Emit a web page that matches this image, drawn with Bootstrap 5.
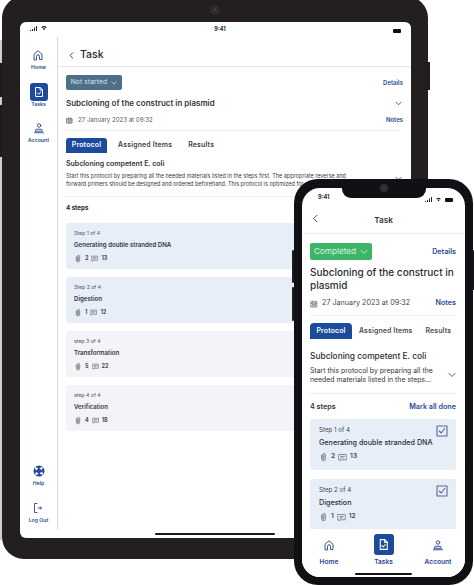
<!DOCTYPE html>
<html lang="en">
<head>
    <meta charset="UTF-8">
    <meta name="viewport" content="width=device-width, initial-scale=1.0">
    <title>Task</title>
    <link rel="stylesheet" href="https://cdn.jsdelivr.net/npm/bootstrap@5.3.0/dist/css/bootstrap.min.css">
    <style>
        html, body { margin: 0; height: 100%; background: #fff; overflow: hidden; }
        body { font-family: Inter, "Liberation Sans", sans-serif; color: #24262b; }
        .stage { position: relative; width: 474px; height: 586px; overflow: hidden; }
        .ico { display: block; fill: none; stroke: currentColor; stroke-linecap: round; stroke-linejoin: round; flex: none; }
        .blue-text { color: #2a4a94; }
        .grey-ico { color: #6f737b; }

        /* tablet */
        .tablet-btn-strip { position: absolute; left: 0; top: 40px; width: 2px; height: 500px; background: #cfcdcd; }
        .tablet-key { position: absolute; background: #1d1b1c; }
        .tablet-frame { position: absolute; left: 2px; top: -4px; width: 426px; height: 563px; background: #231f20; border-radius: 22px; padding: 26px 17px 21px 18px; }
        .tablet-screen { width: 391px; height: 516px; background: #fff; border-radius: 6px; overflow: hidden; position: relative; }
        .t-status { height: 15px; padding: 3px 10px 0 10px; font-size: 5.5px; font-weight: 700; }
        .t-body { height: 501px; }
        .t-side { width: 38px; height: 493px; border-right: 1px solid #d8d8d8; padding: 12px 0 6px; flex: none; }
        .t-navitem { font-size: 5.2px; line-height: 7px; font-weight: 600; color: #2a4a94; gap: 3px; }
        .t-home { margin-bottom: 12px; }
        .t-tasks { gap: 0; margin-bottom: 14px; }
        .t-help { margin-bottom: 15px; }
        .t-on-box { width: 18px; height: 18px; background: #1d4b9c; border-radius: 3px; color: #fff; flex: none; }
        .t-main { flex: 1; min-width: 0; }
        .t-head { height: 30px; border-bottom: 1px solid #e6e6e6; padding: 7px 0 0 10px; gap: 5px; font-size: 10.5px; font-weight: 500; }
        .t-content { padding: 8px 8px 0 8px; }
        .chip-grey { background: #4d6f88; color: #dfe8ef; font-size: 6.6px; height: 15px; width: 56px; border-radius: 2px; gap: 4px; letter-spacing: .15px; }
        .t-title { font-size: 8px; font-weight: 600; color: #34363b; margin: 8px 0 0; line-height: 11px; }
        .t-meta { font-size: 6.1px; color: #55585e; gap: 5px; height: 10px; margin-top: 6px; }
        .t-link { font-size: 6px; font-weight: 600; }
        .t-title-arrow { margin-right: 1px; margin-top: 8px; }
        .t-sep { border-top: 1px solid #eceef1; margin-right: 3px; }
        .t-sep-top { margin-top: 5px; }
        .t-sep-mid { margin-top: 7px; }
        .t-tabs { margin-top: 7px; font-size: 6.9px; font-weight: 600; color: #3d4046; letter-spacing: .2px; }
        .t-tab { padding: 0 8px; height: 15px; display: flex; align-items: center; }
        .t-tab.is-on { background: #1d4b9c; color: #fff; border-radius: 3px 3px 0 0; padding: 0 5px; width: 41px; justify-content: center; margin-right: 3px; }
        .t-proto { font-size: 7px; font-weight: 600; margin-top: 6px; line-height: 10px; color: #30333a; }
        .t-desc { font-size: 5.5px; line-height: 7.6px; color: #3a3c42; margin-top: 4px; white-space: nowrap; height: 16px; }
        .t-steps { font-size: 6.2px; font-weight: 700; margin-top: 7px; line-height: 8px; }
        .t-cards { margin-top: 11px; gap: 8px; margin-right: -4px; }
        .t-card { height: 46px; border-radius: 3px; padding: 7px 8px; }
        .tone-blue { background: #e7eef8; }
        .tone-grey { background: #f3f3f8; }
        .t-card-num { font-size: 5.2px; color: #55585e; line-height: 7px; }
        .t-card-name { font-size: 6.1px; font-weight: 600; color: #33363c; line-height: 8px; margin-top: 4px; }
        .t-card-meta { font-size: 5.5px; font-weight: 700; color: #4a4d53; gap: 3px; margin-top: 5px; height: 8px; }
        .t-homebar { position: absolute; left: 135px; bottom: 3px; width: 120px; height: 2px; background: #1c1c1c; border-radius: 1px; }
        .t-chevron { position: absolute; right: 9px; top: 153px; color: #2a4a94; }

        /* phone */
        .phone-key { position: absolute; background: #1a1a1c; border-radius: 1px; }
        .phone-frame { position: absolute; left: 294px; top: 179px; width: 179px; height: 406px; background: #111014; border-radius: 24px; padding: 9px 8px 8px 8px; }
        .phone-screen { width: 163px; height: 389px; background: #fff; border-radius: 18px; overflow: hidden; position: relative; }
        .phone-notch { position: absolute; left: 40px; top: 0; width: 84px; height: 10px; background: #111014; border-radius: 0 0 9px 9px; }
        .cam { position: absolute; width: 6px; height: 6px; border-radius: 50%; background: #3d3c40; border: 1.5px solid #1a1a1d; box-shadow: 0 0 0 1px #3a393d; }
        .p-status { height: 17px; padding: 5px 12px 0 16px; font-size: 5.6px; font-weight: 700; }
        .p-head { height: 29px; border-bottom: 1px solid #eceef1; padding: 3px 10px 0; position: relative; font-size: 8.2px; font-weight: 600; color: #33363c; }
        .p-back { position: absolute; left: 9px; top: 9px; color: #3d5276; }
        .p-content { padding: 9px 9px 0 8px; }
        .chip-green { background: #3db568; color: #d9f3e1; font-size: 8.2px; width: 62px; height: 17px; border-radius: 2px; gap: 4px; }
        .p-link { font-size: 7.2px; font-weight: 600; line-height: 11px; }
        .p-title { font-size: 10px; line-height: 13px; font-weight: 500; color: #2b2d32; margin: 6px 0 0; }
        .p-meta { font-size: 7.2px; color: #44474d; gap: 4px; margin-top: 6px; height: 11px; }
        .p-sep { border-top: 1px solid #eceef1; }
        .p-sep-top { margin-top: 6px; }
        .p-sep-mid { margin-top: 9px; }
        .p-tabs { margin-top: 7px; font-size: 6.9px; font-weight: 600; color: #4a4d53; letter-spacing: .15px; }
        .p-tab { height: 16px; display: flex; align-items: center; }
        .p-tab.is-on { width: 42px; justify-content: center; background: #1d4b9c; color: #fff; border-radius: 4px 4px 0 0; margin-right: 7px; }
        .p-tab-last { margin-left: 13px; }
        .p-proto { font-size: 8.4px; font-weight: 500; line-height: 11px; margin-top: 12px; color: #2b2d32; }
        .p-desc { font-size: 6.9px; line-height: 9px; color: #33363c; margin-top: 4px; white-space: nowrap; }
        .p-steps-row { margin-top: 7px; }
        .p-steps { font-size: 7.2px; font-weight: 600; line-height: 9px; color: #33363c; }
        .p-cards { margin-top: 7px; gap: 9px; }
        .p-card { height: 51px; border-radius: 3px; padding: 7px 9px; position: relative; flex: none; }
        .p-card-num { font-size: 6.2px; color: #44474d; line-height: 8px; }
        .p-card-name { font-size: 7.2px; font-weight: 500; color: #2b2d32; line-height: 9px; margin-top: 4px; }
        .p-card-meta { font-size: 6.6px; font-weight: 600; color: #44474d; gap: 3px; margin-top: 6px; height: 8px; }
        .p-check { position: absolute; right: 8px; top: 6px; color: #5a6a94; }
        .p-nav { position: absolute; left: 0; right: 0; bottom: 0; height: 48px; background: #fff; padding: 5px 7px 0 7px; }
        .p-navitem { width: 40px; font-size: 6.6px; font-weight: 600; color: #2a4a94; gap: 3px; }
        .p-on-box { width: 20px; height: 21px; background: #1d4b9c; border-radius: 3px; color: #fff; }
        .p-ico-box { height: 21px; }
        .p-homebar { position: absolute; left: 53px; bottom: 2px; width: 57px; height: 2px; background: #111; border-radius: 1px; }
    </style>
</head>
<body>
<svg width="0" height="0" class="position-absolute">
    <defs>
        <symbol id="i-home" viewBox="0 0 24 24"><path d="M4 21V10.500L12 3.500l8 7V21h-5v-6.500a3 3 0 0 0-6 0V21z"/></symbol>
        <symbol id="i-task" viewBox="0 0 24 24"><path d="M6 3h8.500L19 7.500V21H6z"/><path d="M14 3v5h5"/><path d="M9 14l2.500 2.500L15.500 12"/></symbol>
        <symbol id="i-user" viewBox="0 0 24 24"><circle cx="12" cy="7" r="3.500"/><path d="M7 14.500h10l2 4H5z"/><path d="M3 21.500h18"/></symbol>
        <symbol id="i-help" viewBox="0 0 24 24"><circle cx="12" cy="12" r="11" fill="currentColor" stroke="none"/><path d="M5.500 5.500l4 1.500-2.500 2.500zM18.500 5.500L17 9.500 14.500 7zM5.500 18.500l1.500-4 2.500 2.500zM18.500 18.500l-4-1.500 2.500-2.500z" fill="#fff" stroke="#fff" stroke-width="2"/></symbol>
        <symbol id="i-logout" viewBox="0 0 24 24"><path d="M10 3H5v18h5"/><path d="M12 12h7M16.500 9.500L19 12l-2.500 2.500"/></symbol>
        <symbol id="i-clip" viewBox="0 0 24 24"><path d="M7 7v10a5 5 0 0 0 10 0V6a3.500 3.500 0 0 0-7 0v11a1.500 1.500 0 0 0 3 0V7"/></symbol>
        <symbol id="i-comment" viewBox="0 0 24 24"><path d="M2 4h20v14H9l-4 3v-3H2z"/><path d="M7 9h10M7 13h7"/></symbol>
        <symbol id="i-cal" viewBox="0 0 24 24"><path d="M3.500 5.500h17V21h-17zM3.500 10h17M8 3v4M16 3v4"/><path d="M7 14h10M7 17.500h10"/></symbol>
        <symbol id="i-down" viewBox="0 0 24 24"><path d="M3 7.500l9 9 9-9"/></symbol>
        <symbol id="i-left" viewBox="0 0 24 24"><path d="M16 3l-9 9 9 9"/></symbol>
        <symbol id="i-box" viewBox="0 0 24 24"><path d="M2 2h20v20H2z"/><path d="M6.500 12l4 4 7-9"/></symbol>
        <symbol id="i-wifi" viewBox="0 0 24 24"><path d="M1 9a16 16 0 0 1 22 0l-3.500 3.500a11 11 0 0 0-15 0zM7 15a7 7 0 0 1 10 0l-5 6z" fill="currentColor" stroke="none"/></symbol>
    </defs>
</svg>

<div class="stage">
    <div class="tablet-btn-strip"></div>
    <div class="tablet-key" style="left:0;top:63px;width:2px;height:34px"></div>
    <div class="tablet-key" style="left:0;top:105px;width:2px;height:52px"></div>
    <div class="tablet-key" style="left:428px;top:62px;width:2px;height:28px"></div>

    <!-- tablet -->
    <div class="tablet-frame">
        <div class="tablet-screen">
            <div class="t-status d-flex justify-content-between align-items-start">
                <span class="d-flex align-items-center gap-1">
                    <svg width="7" height="5" viewBox="0 0 7 5"><path d="M0 4h1v1H0zM2 3h1v2H2zM4 1.500h1V5H4zM6 0h1v5H6z" fill="#222"/></svg>
                    <svg class="ico" width="6" height="6"><use href="#i-wifi"/></svg>
                </span>
                <span>9:41</span>
                <svg width="8" height="4" class="mt-1"><rect width="8" height="4" rx="1" fill="#111"/></svg>
            </div>
            <div class="t-body d-flex">
                <div class="t-side d-flex flex-column align-items-center">
                    <div class="t-navitem t-home d-flex flex-column align-items-center">
                        <svg class="ico" width="12" height="12" stroke-width="1.900"><use href="#i-home"/></svg>Home
                    </div>
                    <div class="t-navitem t-tasks d-flex flex-column align-items-center">
                        <span class="t-on-box d-flex align-items-center justify-content-center"><svg class="ico" width="12" height="12" stroke-width="2"><use href="#i-task"/></svg></span>Tasks
                    </div>
                    <div class="t-navitem d-flex flex-column align-items-center">
                        <svg class="ico" width="12" height="12" stroke-width="1.800"><use href="#i-user"/></svg>Account
                    </div>
                    <div class="t-navitem t-help d-flex flex-column align-items-center mt-auto">
                        <svg class="ico" width="12" height="12"><use href="#i-help"/></svg>Help
                    </div>
                    <div class="t-navitem d-flex flex-column align-items-center">
                        <svg class="ico" width="12" height="12" stroke-width="1.800"><use href="#i-logout"/></svg>Log Out
                    </div>
                </div>
                <div class="t-main">
                    <div class="t-head d-flex align-items-center">
                        <svg class="ico" width="7" height="7" stroke-width="3"><use href="#i-left"/></svg>Task
                    </div>
                    <div class="t-content">
                        <div class="d-flex justify-content-between align-items-center">
                            <span class="chip-grey d-flex align-items-center justify-content-center">Not started <svg class="ico" width="6" height="6" stroke-width="3"><use href="#i-down"/></svg></span>
                            <span class="t-link blue-text">Details</span>
                        </div>
                        <div class="d-flex justify-content-between align-items-center">
                            <h1 class="t-title">Subcloning of the construct in plasmid</h1>
                            <svg class="ico blue-text t-title-arrow" width="7" height="7" stroke-width="3"><use href="#i-down"/></svg>
                        </div>
                        <div class="d-flex justify-content-between align-items-center">
                            <div class="t-meta d-flex align-items-center">
                                <svg class="ico grey-ico" width="7" height="7" stroke-width="3"><use href="#i-cal"/></svg>27 January 2023 at 09:32
                            </div>
                            <span class="t-link blue-text mt-1">Notes</span>
                        </div>
                        <div class="t-sep t-sep-top"></div>
                        <div class="t-tabs d-flex">
                            <div class="t-tab is-on">Protocol</div>
                            <div class="t-tab">Assigned Items</div>
                            <div class="t-tab">Results</div>
                        </div>
                        <div class="t-proto">Subcloning competent E. coli</div>
                        <div class="t-desc">Start this protocol by preparing all the needed materials listed in the steps first. The appropriate reverse and<br>forward primers should be designed and ordered beforehand. This protocol is optimized for competent cells.</div>
                        <div class="t-sep t-sep-mid"></div>
                        <div class="t-steps">4 steps</div>
                        <div class="t-cards d-flex flex-column">
                            <div class="t-card tone-blue">
                                <div class="t-card-num">Step 1 of 4</div>
                                <div class="t-card-name">Generating double stranded DNA</div>
                                <div class="t-card-meta d-flex align-items-center"><svg class="ico grey-ico" width="8" height="9" stroke-width="2.400"><use href="#i-clip"/></svg> 2 <svg class="ico grey-ico" width="7" height="7" stroke-width="2.400"><use href="#i-comment"/></svg>13</div>
                            </div>
                            <div class="t-card tone-blue">
                                <div class="t-card-num">Step 2 of 4</div>
                                <div class="t-card-name">Digestion</div>
                                <div class="t-card-meta d-flex align-items-center"><svg class="ico grey-ico" width="8" height="9" stroke-width="2.400"><use href="#i-clip"/></svg> 1 <svg class="ico grey-ico" width="7" height="7" stroke-width="2.400"><use href="#i-comment"/></svg>12</div>
                            </div>
                            <div class="t-card tone-grey">
                                <div class="t-card-num">step 3 of 4</div>
                                <div class="t-card-name">Transformation</div>
                                <div class="t-card-meta d-flex align-items-center"><svg class="ico grey-ico" width="8" height="9" stroke-width="2.400"><use href="#i-clip"/></svg> 5 <svg class="ico grey-ico" width="7" height="7" stroke-width="2.400"><use href="#i-comment"/></svg>22</div>
                            </div>
                            <div class="t-card tone-grey">
                                <div class="t-card-num">step 4 of 4</div>
                                <div class="t-card-name">Verification</div>
                                <div class="t-card-meta d-flex align-items-center"><svg class="ico grey-ico" width="8" height="9" stroke-width="2.400"><use href="#i-clip"/></svg> 4 <svg class="ico grey-ico" width="7" height="7" stroke-width="2.400"><use href="#i-comment"/></svg>18</div>
                            </div>
                        </div>
                    </div>
                </div>
            </div>
            <svg class="ico t-chevron" width="7" height="7" stroke-width="3"><use href="#i-down"/></svg>
            <div class="t-homebar"></div>
        </div>
    </div>
    <div class="cam" style="left:212px;top:7px"></div>

    <!-- phone -->
    <div class="phone-key" style="left:292px;top:250px;width:2px;height:33px"></div>
    <div class="phone-key" style="left:292px;top:287px;width:2px;height:34px"></div>
    <div class="phone-key" style="left:473px;top:250px;width:1px;height:40px"></div>
    <div class="phone-frame">
        <div class="phone-screen">
            <div class="p-status d-flex justify-content-between align-items-start">
                <span>9:41</span>
                <span class="d-flex align-items-center gap-1 mt-1">
                    <svg width="7" height="5" viewBox="0 0 7 5"><path d="M0 4h1v1H0zM2 3h1v2H2zM4 1.500h1V5H4zM6 0h1v5H6z" fill="#222"/></svg>
                    <svg class="ico" width="5" height="5"><use href="#i-wifi"/></svg>
                    <svg width="8" height="4"><rect width="8" height="4" rx="1" fill="#111"/></svg>
                </span>
            </div>
            <div class="phone-notch"></div>
            <div class="p-head d-flex align-items-center justify-content-center">
                <svg class="ico p-back" width="9" height="9" stroke-width="2.600"><use href="#i-left"/></svg>Task
            </div>
            <div class="p-content">
                <div class="d-flex justify-content-between align-items-center">
                    <span class="chip-green d-flex align-items-center justify-content-center">Completed <svg class="ico" width="8" height="8" stroke-width="2.600"><use href="#i-down"/></svg></span>
                    <span class="p-link blue-text">Details</span>
                </div>
                <h2 class="p-title">Subcloning of the construct in plasmid</h2>
                <div class="d-flex justify-content-between align-items-center">
                    <div class="p-meta d-flex align-items-center">
                        <svg class="ico grey-ico" width="8" height="8" stroke-width="2.400"><use href="#i-cal"/></svg>27 January 2023 at 09:32
                    </div>
                    <span class="p-link blue-text mt-1">Notes</span>
                </div>
                <div class="p-sep p-sep-top"></div>
                <div class="p-tabs d-flex">
                    <div class="p-tab is-on">Protocol</div>
                    <div class="p-tab">Assigned Items</div>
                    <div class="p-tab p-tab-last">Results</div>
                </div>
                <div class="p-proto">Subcloning competent E. coli</div>
                <div class="d-flex justify-content-between align-items-center">
                    <div class="p-desc">Start this protocol by preparing all the<br>needed materials listed in the steps...</div>
                    <svg class="ico blue-text mt-1" width="8" height="8" stroke-width="2.600"><use href="#i-down"/></svg>
                </div>
                <div class="p-sep p-sep-mid"></div>
                <div class="p-steps-row d-flex justify-content-between align-items-center">
                    <div class="p-steps">4 steps</div>
                    <div class="p-link blue-text">Mark all done</div>
                </div>
                <div class="p-cards d-flex flex-column">
                    <div class="p-card tone-blue">
                        <div class="p-card-num">Step 1 of 4</div>
                        <div class="p-card-name">Generating double stranded DNA</div>
                        <div class="p-card-meta d-flex align-items-center"><svg class="ico grey-ico" width="9" height="10" stroke-width="2.200"><use href="#i-clip"/></svg> 2 <svg class="ico grey-ico" width="9" height="9" stroke-width="2"><use href="#i-comment"/></svg>13</div>
                        <svg class="ico p-check" width="12" height="12" stroke-width="2.200"><use href="#i-box"/></svg>
                    </div>
                    <div class="p-card tone-blue">
                        <div class="p-card-num">Step 2 of 4</div>
                        <div class="p-card-name">Digestion</div>
                        <div class="p-card-meta d-flex align-items-center"><svg class="ico grey-ico" width="9" height="10" stroke-width="2.200"><use href="#i-clip"/></svg> 1 <svg class="ico grey-ico" width="9" height="9" stroke-width="2"><use href="#i-comment"/></svg>12</div>
                        <svg class="ico p-check" width="12" height="12" stroke-width="2.200"><use href="#i-box"/></svg>
                    </div>
                </div>
            </div>
            <div class="p-nav d-flex justify-content-between align-items-start">
                <div class="p-navitem d-flex flex-column align-items-center">
                    <span class="p-ico-box d-flex align-items-center"><svg class="ico" width="12" height="12" stroke-width="1.900"><use href="#i-home"/></svg></span>Home
                </div>
                <div class="p-navitem d-flex flex-column align-items-center">
                    <span class="p-on-box d-flex align-items-center justify-content-center"><svg class="ico" width="13" height="13" stroke-width="2"><use href="#i-task"/></svg></span>Tasks
                </div>
                <div class="p-navitem d-flex flex-column align-items-center">
                    <span class="p-ico-box d-flex align-items-center"><svg class="ico" width="12" height="12" stroke-width="1.900"><use href="#i-user"/></svg></span>Account
                </div>
            </div>
            <div class="p-homebar"></div>
        </div>
    </div>
    <div class="cam" style="left:381px;top:185px"></div>
</div>
<script src="https://cdn.jsdelivr.net/npm/bootstrap@5.3.0/dist/js/bootstrap.bundle.min.js"></script>
</body>
</html>
